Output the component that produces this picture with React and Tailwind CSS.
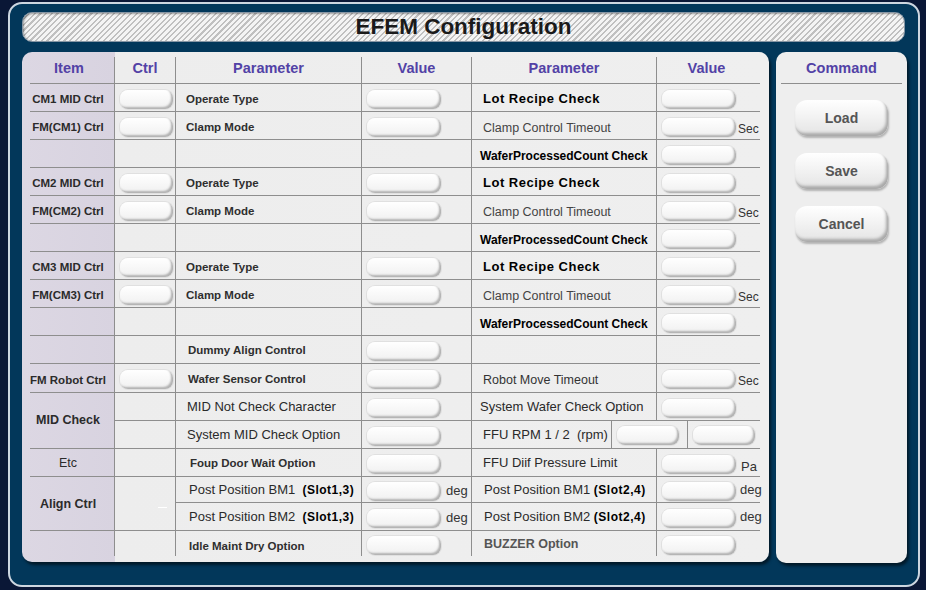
import React from 'react';

const F = { fontFamily: '"Liberation Sans", Arial, sans-serif' };

function Pill({ w = 'w-[74px]' }) {
  return (
    <div
      className={`${w} h-[19px] shrink-0 rounded-[8px] bg-linear-to-b from-white to-[#f0f0f0] shadow-[inset_-2px_-2px_2px_#b2b2b2,0_0_0_1px_#e0e0e0]`}
    />
  );
}

const L = 'border-[#8e8e8e]';

function Item({ children, last, span, cls = 'text-[11.5px] font-bold pt-[5px]' }) {
  return (
    <div
      className={`ml-2 pr-[8px] border-r ${last ? '' : 'border-b'} ${L} ${span ? 'row-span-2' : ''} flex items-center justify-center whitespace-nowrap text-[#2b2b2b] ${cls}`}
    >
      {children}
    </div>
  );
}

function Ctrl({ btn, last, span, dash }) {
  return (
    <div className={`relative border-r ${last ? '' : 'border-b'} ${L} ${span ? 'row-span-2' : ''} flex items-center pl-[5px] pt-[3px]`}>
      {btn && <Pill w="w-[53px]" />}
      {dash && <div className="absolute left-[43px] top-[30px] w-[9px] h-[1px] bg-white" />}
    </div>
  );
}

function Param({ children, last, cls = 'text-[11.5px] font-bold text-[#2f2f2f]', pl = 'pl-[10px]', pt = 'pt-[5px]' }) {
  return (
    <div className={`border-r ${last ? '' : 'border-b'} ${L} flex items-center ${pl} ${pt} whitespace-nowrap ${cls}`}>
      {children}
    </div>
  );
}

function Val({ btn = true, unit, last }) {
  return (
    <div className={`border-r ${last ? '' : 'border-b'} ${L} flex items-center pl-[5px] pt-[3px]`}>
      {btn && <Pill />}
      {unit && <span className="ml-[5px] text-[13px] text-[#333]">{unit}</span>}
    </div>
  );
}

function Param2({ children, cls = 'text-[12.5px] text-[#3a3a3a]', pl = 'pl-[11px]', pt = 'pt-[3px]', top, last }) {
  return (
    <div
      className={`border-r ${last ? '' : 'border-b'} ${L} flex ${top ? 'items-start pt-[4px]' : `items-center ${pt}`} ${pl} whitespace-nowrap ${cls}`}
    >
      {children}
    </div>
  );
}

function Val2({ btn = true, unit, unitCls = 'text-[12px] ml-[2px]', last }) {
  return (
    <div className={`mr-[9px] ${last ? '' : 'border-b'} ${L} flex items-center pl-[5px] pt-[3px]`}>
      {btn && <Pill />}
      {unit && <span className={`text-[#333] ${unitCls}`}>{unit}</span>}
    </div>
  );
}

const H = 'text-[14.5px] font-bold text-[#5242a6]';

function CmdBtn({ children }) {
  return (
    <div className="w-[93px] h-[36px] rounded-[12px] bg-linear-to-b from-white to-[#e4e4e4] shadow-[inset_-2px_-3px_3px_#a9a9a9,1px_2px_2px_rgba(0,0,0,0.25)] flex items-center justify-center text-[14px] font-bold text-[#555]">
      {children}
    </div>
  );
}

const lot = 'text-[13px] font-bold text-black tracking-[0.5px]';
const clamp = 'text-[12.5px] text-[#444]';
const wafer = 'text-[12px] font-bold text-black';
const big = 'text-[13px] text-[#2a2a2a]';
const slot = 'text-[12px] font-bold text-black tracking-[0.5px]';

export default function App() {
  const groups = [1, 2, 3];
  return (
    <div style={F} className="w-[926px] h-[590px] bg-[#0a1736] overflow-hidden">
      <div className="ml-[8px] mt-[2px] w-[912px] h-[585px] rounded-[14px] border-2 border-[#cdd6e0] bg-[#02375a] pt-[8px] pl-[12px]">
        {/* Title */}
        <div className="w-[883px] h-[30px] rounded-[10px] border border-[#8796a4] shadow-[inset_1px_1px_2px_rgba(0,0,0,0.35)] bg-[repeating-linear-gradient(135deg,#c0c0c0_0px,#c0c0c0_1.5px,#f4f4f4_1.5px,#f4f4f4_4px)] flex items-center justify-center">
          <span className="text-[22.5px] font-bold text-[#1a1a1a] leading-none">EFEM Configuration</span>
        </div>

        <div className="mt-[10px] flex gap-[7px]">
          {/* Table panel */}
          <div className="w-[747px] h-[510px] rounded-[10px] shadow-[2px_3px_3px_rgba(0,0,0,0.55)] bg-[linear-gradient(to_right,#dcd7e3_0px,#d8d3e0_93px,#ededed_93px,#efefef_747px)]">
            <div className="grid grid-cols-[93px_61px_186px_110px_185px_112px] grid-rows-[32px_repeat(10,28px)_29px_28px_28px_28px_26px_28px_25px]">
              {/* Header */}
              <div className={`ml-2 pr-[6px] mt-[5px] border-r border-b ${L} flex items-center justify-center pb-[3px] ${H}`}>Item</div>
              <div className={`mt-[5px] border-r border-b ${L} flex items-center justify-center pb-[3px] ${H}`}>Ctrl</div>
              <div className={`mt-[5px] border-r border-b ${L} flex items-center justify-center pb-[3px] ${H}`}>Parameter</div>
              <div className={`mt-[5px] border-r border-b ${L} flex items-center justify-center pb-[3px] ${H}`}>Value</div>
              <div className={`mt-[5px] border-r border-b ${L} flex items-center justify-center pb-[3px] ${H}`}>Parameter</div>
              <div className={`mt-[5px] mr-[9px] border-b ${L} flex items-center justify-center pb-[3px] pr-[4px] ${H}`}>Value</div>

              {groups.map((g) => (
                <React.Fragment key={g}>
                  <Item>{`CM${g} MID Ctrl`}</Item>
                  <Ctrl btn />
                  <Param>Operate Type</Param>
                  <Val />
                  <Param2 cls={lot} pt="pt-[2px]">Lot Recipe Check</Param2>
                  <Val2 />

                  <Item>{`FM(CM${g}) Ctrl`}</Item>
                  <Ctrl btn />
                  <Param>Clamp Mode</Param>
                  <Val />
                  <Param2 cls={clamp} pt="pt-[6px]">Clamp Control Timeout</Param2>
                  <Val2 unit="Sec" unitCls="text-[12px] ml-[2px] mt-[3px]" />

                  <Item />
                  <Ctrl />
                  <Param />
                  <Val btn={false} />
                  <Param2 cls={wafer} pl="pl-[8px]" pt="pt-[4px]">WaferProcessedCount Check</Param2>
                  <Val2 />
                </React.Fragment>
              ))}

              {/* Row 10 */}
              <Item />
              <Ctrl />
              <Param pl="pl-[12px]" pt="pt-[3px]">Dummy Align Control</Param>
              <Val />
              <Param2 />
              <Val2 btn={false} />

              {/* Row 11 */}
              <Item>FM Robot Ctrl</Item>
              <Ctrl btn />
              <Param pl="pl-[12px]" pt="pt-[4px]">Wafer Sensor Control</Param>
              <Val />
              <Param2 cls="text-[12.5px] text-[#333]" pt="pt-[5px]">Robot Move Timeout</Param2>
              <Val2 unit="Sec" unitCls="text-[12px] ml-[2px] mt-[3px]" />

              {/* Row 12-13 */}
              <Item span cls="text-[12.5px] font-bold">MID Check</Item>
              <Ctrl />
              <Param cls={big} pl="pl-[11px]" pt="pt-0">MID Not Check Character</Param>
              <Val />
              <Param2 cls={big} pl="pl-[8px]" pt="pt-0">System Wafer Check Option</Param2>
              <Val2 />

              <Ctrl />
              <Param cls={big} pl="pl-[11px]" pt="pt-0">System MID Check Option</Param>
              <Val />
              <div className={`col-span-2 mr-[9px] border-b ${L} flex`}>
                <div className={`w-[140px] border-r ${L} flex items-center pl-[11px] whitespace-nowrap ${big}`}>
                  FFU RPM 1 / 2&nbsp;&nbsp;(rpm)
                </div>
                <div className={`w-[76px] border-r ${L} flex items-center pl-[5px] pt-[2px]`}>
                  <Pill w="w-[62px]" />
                </div>
                <div className="flex-1 flex items-center pl-[5px] pt-[2px]">
                  <Pill w="w-[62px]" />
                </div>
              </div>

              {/* Row 14 */}
              <Item cls="text-[12.5px] font-normal pt-[1px]">Etc</Item>
              <Ctrl />
              <Param pl="pl-[14px]" pt="pt-[2px]">Foup Door Wait Option</Param>
              <Val />
              <Param2 cls={big} top>FFU Diif Pressure Limit</Param2>
              <Val2 unit="Pa" unitCls="text-[13px] ml-[5px] mt-[6px]" />

              {/* Row 15-16 */}
              <Item span cls="text-[12.5px] font-bold pt-[1px]">Align Ctrl</Item>
              <Ctrl span dash />
              <Param cls={big} pl="pl-[13px]" pt="pt-[1px]">
                Post Position BM1&nbsp;&nbsp;<span className={slot}>(Slot1,3)</span>
              </Param>
              <Val unit="deg" />
              <Param2 cls={big} pl="pl-[12px]" pt="pt-[1px]">
                Post Position BM1&nbsp;<span className={slot}>(Slot2,4)</span>
              </Param2>
              <Val2 unit="deg" unitCls="text-[13px] ml-[4px] mb-[2px]" />

              <Param cls={big} pl="pl-[13px]" pt="pt-[1px]">
                Post Position BM2&nbsp;&nbsp;<span className={slot}>(Slot1,3)</span>
              </Param>
              <Val unit="deg" />
              <Param2 cls={big} pl="pl-[12px]" pt="pt-[1px]">
                Post Position BM2&nbsp;<span className={slot}>(Slot2,4)</span>
              </Param2>
              <Val2 unit="deg" unitCls="text-[13px] ml-[4px] mb-[2px]" />

              {/* Row 17 */}
              <Item last />
              <Ctrl last />
              <Param last pl="pl-[13px]" pt="pt-[6px]">Idle Maint Dry Option</Param>
              <Val last />
              <Param2 last cls="text-[12.5px] font-bold text-[#555]" pl="pl-[12px]" top>BUZZER Option</Param2>
              <Val2 last />
            </div>
          </div>

          {/* Command panel */}
          <div className="w-[131px] h-[511px] rounded-[10px] shadow-[2px_3px_3px_rgba(0,0,0,0.55)] bg-[#eeeeee] flex flex-col items-center">
            <div className={`self-stretch mx-[5px] h-[32px] border-b ${L} flex items-center justify-center pt-[2px] ${H}`}>
              Command
            </div>
            <div className="mt-[16px] flex flex-col gap-[17px]">
              <CmdBtn>Load</CmdBtn>
              <CmdBtn>Save</CmdBtn>
              <CmdBtn>Cancel</CmdBtn>
            </div>
          </div>
        </div>
      </div>
    </div>
  );
}
